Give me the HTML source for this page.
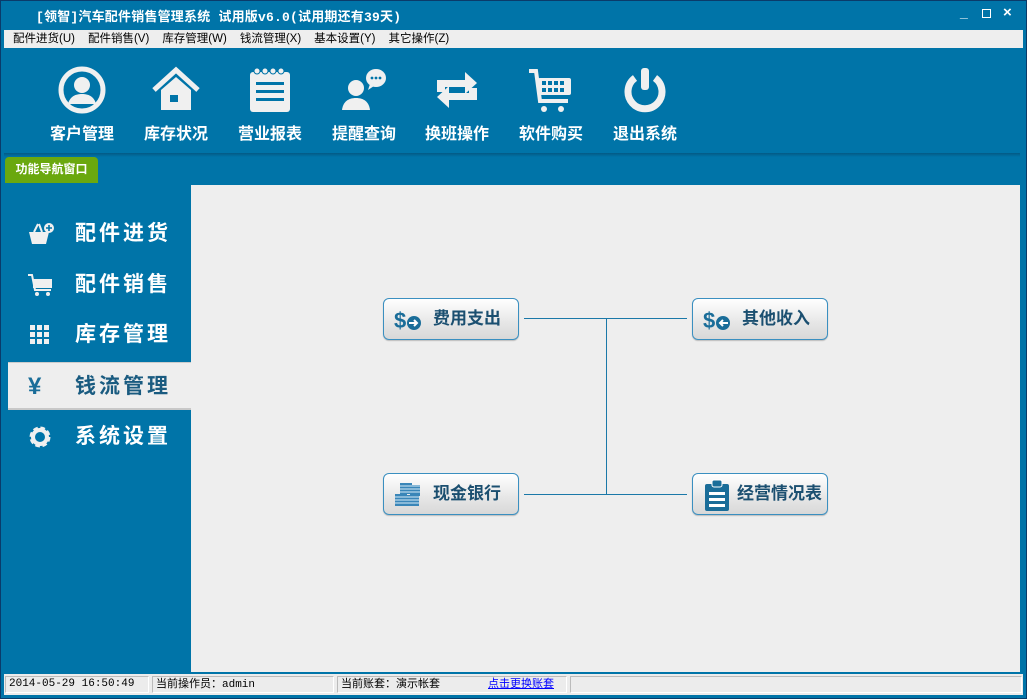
<!DOCTYPE html>
<html><head><meta charset="utf-8"><style>
*{margin:0;padding:0;box-sizing:border-box}
body{width:1027px;height:699px;background:#0074a8;position:relative;overflow:hidden;font-family:"Liberation Sans","Noto Sans CJK SC",sans-serif}
.abs{position:absolute}
#frame{left:0;top:0;width:1027px;height:699px;border:1px solid #0a3b6a}
#title{left:36px;top:6px;color:#fff;font-size:13px;font-weight:bold;font-family:"Liberation Mono","Noto Sans CJK SC",monospace;letter-spacing:0.2px}
#menu{left:4px;top:30px;width:1019px;height:18px;background:#eeeeee;font-size:11.5px;color:#000;line-height:18px}
#menu span{margin-left:9px;margin-right:4px}
.tb{position:absolute;top:66px;width:90px;text-align:center;color:#fff;font-size:16px;font-weight:bold}
.tb svg{display:block;margin:0 auto 6px;height:48px}
#shadow{left:4px;top:153px;width:1016px;height:4px;background:linear-gradient(#035a85,#0074a8)}
#tab{left:5px;top:157px;width:93px;height:26px;background:#6aa80e;border-radius:4px 4px 0 0;color:#fff;font-size:12px;font-weight:bold;line-height:25px;text-align:center}
#panel{left:191px;top:185px;width:829px;height:487px;background:#eeeeee}
.side{position:absolute;left:8px;width:183px;height:48px;color:#fff;font-size:21px;font-weight:bold;letter-spacing:3px;line-height:48px}
.side .t{position:absolute;left:67px}
.side .ic{position:absolute;left:20px;top:12px}
.sel{background:#eeeeee;color:#1a5b80;border-top:1px solid #ccc;border-bottom:2px solid #c8c8c8}
.btn{position:absolute;width:136px;height:42px;border:1px solid #3a8fc0;border-radius:6px;background:linear-gradient(#fff,#e6e6e6 60%,#d8d8d8);color:#1b4f70;font-size:17px;font-weight:bold;line-height:40px;box-shadow:0 1px 1px #bbb}
.btn .t{position:absolute;left:49px}
.ln{position:absolute;background:#1a78a8}
#status{left:4px;top:674px;width:1019px;height:21px;background:#ececec;font-size:11px}
.sc{position:absolute;top:2px;height:17px;border:1px solid #bbb;border-right-color:#fff;border-bottom-color:#fff;line-height:15px;padding-left:3px;font-family:"Liberation Mono","Noto Sans CJK SC",monospace}
</style></head><body>
<div id="frame" class="abs"></div>
<div id="title" class="abs">[领智]汽车配件销售管理系统 试用版v6.0(试用期还有39天)</div>
<div class="abs" style="left:960px;top:4px;color:#fff;font-size:14px;font-weight:bold">_</div>
<div class="abs" style="left:982px;top:9px;width:9px;height:9px;border:1.5px solid #fff"></div>
<div class="abs" style="left:1003px;top:4px;color:#fff;font-size:15px;font-weight:bold">×</div>
<div id="menu" class="abs"><span>配件进货(U)</span><span>配件销售(V)</span><span>库存管理(W)</span><span>钱流管理(X)</span><span>基本设置(Y)</span><span>其它操作(Z)</span></div>

<div class="tb" style="left:37px"><svg viewBox="0 0 48 48" width="48"><circle cx="24" cy="24" r="21" fill="none" stroke="#f0f0f0" stroke-width="5"/><circle cx="24" cy="19" r="8" fill="#f0f0f0"/><path d="M10 38c2-8 8-10 14-10s12 2 14 10z" fill="#f0f0f0"/></svg>客户管理</div>
<div class="tb" style="left:131px"><svg viewBox="0 0 48 48" width="48"><path d="M2 24L24 4l22 20" fill="none" stroke="#f0f0f0" stroke-width="5"/><path d="M9 24v20h30V24L24 11z" fill="#f0f0f0"/><rect x="18" y="29" width="8" height="7" fill="#0074a8"/></svg>库存状况</div>
<div class="tb" style="left:225px"><svg viewBox="0 0 48 48" width="48"><rect x="4" y="6" width="40" height="40" rx="3" fill="#f0f0f0"/><g fill="#0074a8"><rect x="10" y="16" width="28" height="3"/><rect x="10" y="24" width="28" height="3"/><rect x="10" y="32" width="28" height="3"/></g><g fill="#f0f0f0" stroke="#0074a8" stroke-width="1"><circle cx="11" cy="5" r="3"/><circle cx="19" cy="5" r="3"/><circle cx="27" cy="5" r="3"/><circle cx="35" cy="5" r="3"/></g></svg>营业报表</div>
<div class="tb" style="left:319px"><svg viewBox="0 0 48 48" width="48"><circle cx="16" cy="22" r="8" fill="#f0f0f0"/><path d="M2 44c1-8 6-12 14-12s13 4 14 12z" fill="#f0f0f0"/><ellipse cx="36" cy="12" rx="10" ry="9" fill="#f0f0f0"/><path d="M30 18l-2 6 6-4z" fill="#f0f0f0"/><g fill="#0074a8"><circle cx="32" cy="12" r="1.4"/><circle cx="36" cy="12" r="1.4"/><circle cx="40" cy="12" r="1.4"/></g></svg>提醒查询</div>
<div class="tb" style="left:412px"><svg viewBox="0 0 48 48" width="48"><path d="M4 26V14h28V6l12 11-12 11v-7H12v5z" fill="#f0f0f0"/><path d="M44 22v12H16v8L4 31l12-11v7h20v-5z" fill="#f0f0f0"/></svg>换班操作</div>
<div class="tb" style="left:506px"><svg viewBox="0 0 48 48" width="48"><path d="M2 5h7l4 30h28" fill="none" stroke="#f0f0f0" stroke-width="4"/><rect x="11" y="12" width="33" height="17" rx="2" fill="#f0f0f0"/><g fill="#0074a8"><rect x="15" y="15" width="4" height="4"/><rect x="21" y="15" width="4" height="4"/><rect x="27" y="15" width="4" height="4"/><rect x="33" y="15" width="4" height="4"/><rect x="15" y="22" width="4" height="4"/><rect x="21" y="22" width="4" height="4"/><rect x="27" y="22" width="4" height="4"/><rect x="33" y="22" width="4" height="4"/></g><circle cx="17" cy="43" r="3" fill="#f0f0f0"/><circle cx="34" cy="43" r="3" fill="#f0f0f0"/></svg>软件购买</div>
<div class="tb" style="left:600px"><svg viewBox="0 0 48 48" width="48"><path d="M14 12A17 17 0 1 0 34 12" fill="none" stroke="#f0f0f0" stroke-width="7"/><rect x="20" y="2" width="8" height="22" rx="3" fill="#f0f0f0"/></svg>退出系统</div>

<div id="shadow" class="abs"></div>
<div id="tab" class="abs">功能导航窗口</div>
<div id="panel" class="abs"></div>

<div class="side" style="top:210px"><svg class="ic" width="26" height="24" viewBox="0 0 26 24"><path d="M1 10h20l-3 12H4z" fill="#f0f0f0"/><path d="M6 10l4-8M14 10l-3-8" stroke="#f0f0f0" stroke-width="2"/><circle cx="21" cy="6" r="5" fill="#f0f0f0"/><path d="M21 3v6M18 6h6" stroke="#0074a8" stroke-width="1.6"/></svg><span class="t">配件进货</span></div>
<div class="side" style="top:261px"><svg class="ic" width="26" height="24" viewBox="0 0 26 24"><path d="M0 2h4l3 15h16" fill="none" stroke="#f0f0f0" stroke-width="2"/><rect x="5" y="6" width="19" height="9" fill="#f0f0f0"/><circle cx="9" cy="21" r="2" fill="#f0f0f0"/><circle cx="20" cy="21" r="2" fill="#f0f0f0"/></svg><span class="t">配件销售</span></div>
<div class="side" style="top:311px"><svg class="ic" width="24" height="24" viewBox="0 0 24 24" style="left:22px"><g fill="#f0f0f0"><rect x="0" y="2" width="5" height="5"/><rect x="7" y="2" width="5" height="5"/><rect x="14" y="2" width="5" height="5"/><rect x="0" y="9" width="5" height="5"/><rect x="7" y="9" width="5" height="5"/><rect x="14" y="9" width="5" height="5"/><rect x="0" y="16" width="5" height="5"/><rect x="7" y="16" width="5" height="5"/><rect x="14" y="16" width="5" height="5"/></g></svg><span class="t">库存管理</span></div>
<div class="side sel" style="top:362px"><span style="position:absolute;left:20px;font-size:24px;color:#1a6d99;font-weight:bold">¥</span><span class="t">钱流管理</span></div>
<div class="side" style="top:413px"><svg class="ic" width="24" height="24" viewBox="0 0 24 24"><circle cx="12" cy="12" r="8" fill="none" stroke="#f0f0f0" stroke-width="5" stroke-dasharray="4 2.3"/><circle cx="12" cy="12" r="7" fill="none" stroke="#f0f0f0" stroke-width="4"/></svg><span class="t">系统设置</span></div>

<div class="ln" style="left:524px;top:318px;width:163px;height:1px"></div>
<div class="ln" style="left:606px;top:318px;width:1px;height:177px"></div>
<div class="ln" style="left:524px;top:494px;width:163px;height:1px"></div>

<div class="btn" style="left:383px;top:298px"><svg class="abs" style="left:10px;top:8px" width="28" height="26" viewBox="0 0 28 26"><text x="0" y="21" font-size="22" font-weight="bold" fill="#1a6d99" font-family="Liberation Sans">$</text><circle cx="20" cy="16" r="7" fill="#1a6d99"/><path d="M15 16h8M20 13l3 3-3 3" stroke="#fff" stroke-width="2" fill="none"/></svg><span class="t">费用支出</span></div>
<div class="btn" style="left:692px;top:298px"><svg class="abs" style="left:10px;top:8px" width="28" height="26" viewBox="0 0 28 26"><text x="0" y="21" font-size="22" font-weight="bold" fill="#1a6d99" font-family="Liberation Sans">$</text><circle cx="20" cy="16" r="7" fill="#1a6d99"/><path d="M25 16h-8M20 13l-3 3 3 3" stroke="#fff" stroke-width="2" fill="none"/></svg><span class="t">其他收入</span></div>
<div class="btn" style="left:383px;top:473px"><svg class="abs" style="left:10px;top:8px" width="28" height="26" viewBox="0 0 28 26"><g fill="#3a86b8"><rect x="6" y="1" width="12" height="11"/><rect x="16" y="3" width="10" height="11"/><rect x="1" y="12" width="12" height="12"/><rect x="13" y="13" width="12" height="11"/></g><g stroke="#d8ecf8" stroke-width="1"><path d="M1 15h24M1 18h24M1 21h24M6 4h20M6 7h20M6 10h20"/></g></svg><span class="t">现金银行</span></div>
<div class="btn" style="left:692px;top:473px"><svg class="abs" style="left:10px;top:5px" width="28" height="32" viewBox="0 0 28 32"><rect x="2" y="5" width="24" height="27" rx="2" fill="#1a6d99"/><rect x="9" y="1" width="10" height="7" rx="2" fill="#1a6d99" stroke="#fff" stroke-width="1"/><g fill="#fff"><rect x="6" y="13" width="16" height="3"/><rect x="6" y="19" width="16" height="3"/><rect x="6" y="25" width="16" height="3"/></g></svg><span class="t" style="left:44px">经营情况表</span></div>

<div id="status" class="abs">
<div class="sc" style="left:1px;width:144px">2014-05-29 16:50:49</div>
<div class="sc" style="left:148px;width:182px;font-family:'Liberation Sans','Noto Sans CJK SC',sans-serif">当前操作员：<span style="font-family:'Liberation Mono',monospace">admin</span></div>
<div class="sc" style="left:333px;width:230px;font-family:'Liberation Sans','Noto Sans CJK SC',sans-serif">当前账套：演示帐套<span style="position:absolute;left:150px;color:#00f;text-decoration:underline">点击更换账套</span></div>
<div class="sc" style="left:566px;width:452px"></div>
</div>
</body></html>
